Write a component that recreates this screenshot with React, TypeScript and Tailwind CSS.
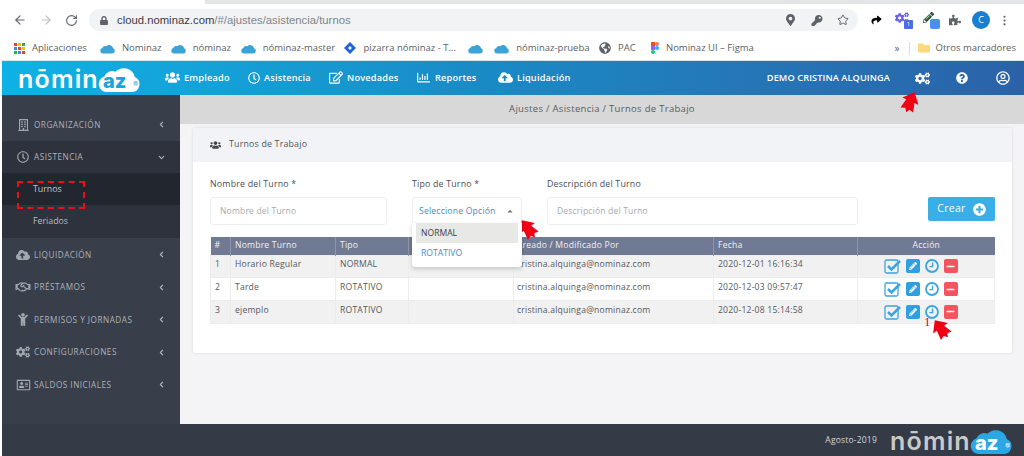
import { ReactNode } from "react"
import { ArrowLeft, ArrowRight, RotateCw, Star, MoreVertical, ChevronLeft, ChevronDown } from "lucide-react"
import {
    FaUsers, FaRegClock, FaRegEdit, FaRegChartBar, FaCloudUploadAlt, FaCogs, FaQuestionCircle, FaRegUserCircle,
    FaRegBuilding, FaRegHandshake, FaChild, FaRegAddressCard, FaPencilAlt, FaMinus, FaPlusCircle,
    FaLock, FaMapMarkerAlt, FaKey, FaPuzzlePiece, FaGlobeAmericas, FaFolder, FaShare, FaCaretUp,
} from "react-icons/fa"

const CloudMark = ({ className }: { className: string }) => (
    <svg viewBox="0 0 24 16" className={className}>
        <path d="M5 16a4.5 4.5 0 0 1-1.4-8.8A5 5 0 0 1 10 4.4 6.5 6.5 0 0 1 21 7.4 4.5 4.5 0 0 1 19.5 16z" fill="currentColor" />
    </svg>
)

const Bookmark = ({ icon, label, w }: { icon: ReactNode; label: string; w: string }) => (
    <div className={`flex items-center gap-[7px] text-[9.5px] text-[#5b5f63] whitespace-nowrap ${w}`}>
        {icon}
        <span>{label}</span>
    </div>
)

const bookmarkCloud = <CloudMark className="w-[15px] h-[11px] text-[#3aa3d8] shrink-0" />

const Logo = ({ text, box, cloud, az, mark }: { text: string; box: string; cloud: string; az: string; mark: string }) => (
    <div className={`flex items-end font-['Inter',sans-serif] leading-none ${box} ${text}`}>
        <span className="text-[25px] font-semibold tracking-[1.2px]">nōmin</span>
        <span className="relative w-[46px] h-[28px] -ml-[3px] shrink-0">
            <CloudMark className={`absolute inset-0 w-[46px] h-[28px] ${cloud}`} />
            <span className={`absolute left-[7px] bottom-[1px] text-[20px] font-extrabold ${az}`}>az</span>
            <span className={`absolute right-[4px] bottom-[4px] text-[7px] ${mark}`}>®</span>
        </span>
    </div>
)

const Arrow = ({ className }: { className: string }) => (
    <svg viewBox="0 0 20 24" className={`absolute text-[#f00014] ${className}`}>
        <path d="M10 0 20 11 15 11 18 21 13 20 11 24 8 20 3 22 5 11 0 11z" fill="currentColor" />
    </svg>
)

const CheckBoxIcon = () => (
    <svg viewBox="0 0 17 16" className="w-[17px] h-[16px]" fill="none" stroke="currentColor">
        <rect x="1" y="2" width="13" height="13" rx="1.5" strokeWidth="1.3" />
        <path d="M4 8 7.5 11.5 16 3" strokeWidth="2.6" />
    </svg>
)

const ClockIcon = () => (
    <svg viewBox="0 0 14 14" className="w-[14px] h-[14px]" fill="none" stroke="currentColor">
        <circle cx="7" cy="7" r="6" strokeWidth="1.8" />
        <path d="M7.6 3.6V7.6H4.4" strokeWidth="1.4" />
    </svg>
)

const navItems = [
    { label: "Empleado", icon: <FaUsers className="w-[15px] h-[13px]" />, w: "w-[83px]" },
    { label: "Asistencia", icon: <FaRegClock className="w-[12px] h-[12px]" />, w: "w-[81px]" },
    { label: "Novedades", icon: <FaRegEdit className="w-[14px] h-[13px]" />, w: "w-[87px]" },
    { label: "Reportes", icon: <FaRegChartBar className="w-[15px] h-[13px]" />, w: "w-[82px]" },
    { label: "Liquidación", icon: <FaCloudUploadAlt className="w-[15px] h-[13px]" />, w: "w-[90px]" },
]

const sideTop = [{ label: "ORGANIZACIÓN", icon: <FaRegBuilding className="w-[11px] h-[12px]" /> }]
const sideRest = [
    { label: "LIQUIDACIÓN", icon: <FaCloudUploadAlt className="w-[14px] h-[12px]" /> },
    { label: "PRÉSTAMOS", icon: <FaRegHandshake className="w-[16px] h-[12px]" /> },
    { label: "PERMISOS Y JORNADAS", icon: <FaChild className="w-[12px] h-[13px]" /> },
    { label: "CONFIGURACIONES", icon: <FaCogs className="w-[14px] h-[12px]" /> },
    { label: "SALDOS INICIALES", icon: <FaRegAddressCard className="w-[15px] h-[12px]" /> },
]

const SideRow = ({ icon, label, open }: { icon: ReactNode; label: string; open?: boolean }) => (
    <div className={`h-[32.5px] flex items-center pt-[1px] pl-[13px] pr-[14px] text-[#aeb2ba] text-[8.2px] tracking-[0.5px] ${open ? "bg-[#2e323c]" : ""}`}>
        <span className="w-[16px] flex justify-center text-[#a2a6ae]">{icon}</span>
        <span className="ml-[3px] flex-1 whitespace-nowrap">{label}</span>
        {open ? <ChevronDown className="w-[9px] h-[9px]" strokeWidth={3} /> : <ChevronLeft className="w-[9px] h-[9px]" strokeWidth={3} />}
    </div>
)

const rows = [
    { n: "1", name: "Horario Regular", tipo: "NORMAL", fecha: "2020-12-01 16:16:34" },
    { n: "2", name: "Tarde", tipo: "ROTATIVO", fecha: "2020-12-03 09:57:47" },
    { n: "3", name: "ejemplo", tipo: "ROTATIVO", fecha: "2020-12-08 15:14:58" },
]

const Field = ({ label, holder, w }: { label: string; holder: string; w: string }) => (
    <div className={w}>
        <div className="h-[26px] text-[8.8px] text-[#4a4d52] leading-[26px] tracking-[0.2px] whitespace-nowrap">{label}</div>
        <div className="h-[28px] border border-[#eeeeee] rounded-[3px] bg-white px-[9px] flex items-center text-[8.5px] text-[#a6a9ad] tracking-[0.2px] whitespace-nowrap overflow-hidden">{holder}</div>
    </div>
)

const App = () => {
    return (
        <div className="relative w-[1024px] h-[456px] overflow-hidden bg-white font-['Open_Sans',sans-serif]">
            {/* browser chrome */}
            <div className="h-[4px] bg-[#e4e5e7] ml-[205px]" />
            <div className="h-[32px] flex items-center pl-[13px] pr-[12px] bg-white">
                <ArrowLeft className="w-[14px] h-[14px] text-[#5f6368]" />
                <ArrowRight className="ml-[12px] w-[14px] h-[14px] text-[#bdc0c4]" />
                <RotateCw className="ml-[12px] w-[13px] h-[13px] text-[#5f6368]" />
                <div className="ml-[11px] w-[769px] h-[22px] rounded-full bg-[#f1f3f4] flex items-center pl-[11px] pr-[9px]">
                    <FaLock className="w-[8px] h-[9px] text-[#5f6368]" />
                    <span className="ml-[9px] text-[11.3px] text-[#3c4043] font-['Liberation_Sans',sans-serif]">
                        cloud.nominaz.com<span className="text-[#80868b]">/#/ajustes/asistencia/turnos</span>
                    </span>
                    <FaMapMarkerAlt className="ml-auto w-[9px] h-[12px] text-[#5f6368]" />
                    <FaKey className="ml-[16px] w-[12px] h-[11px] text-[#5f6368]" />
                    <Star className="ml-[14px] w-[12px] h-[12px] text-[#5f6368]" />
                </div>
                <FaShare className="ml-[12px] w-[13px] h-[10px] text-black" />
                <div className="relative ml-[12px] w-[18px] h-[18px]">
                    <FaCogs className="w-[14px] h-[14px] text-[#6a63e8]" />
                    <span className="absolute right-0 bottom-0 w-[9px] h-[9px] bg-[#4c6ce0] rounded-[1px] text-[6px] leading-[9px] text-center text-white">1</span>
                </div>
                <div className="relative ml-[10px] w-[17px] h-[17px]">
                    <FaPencilAlt className="w-[11px] h-[11px] text-[#2f5d3a]" />
                    <span className="absolute right-0 bottom-0 w-[10px] h-[10px] bg-[#4a8ef0] rounded-[2px]" />
                </div>
                <FaPuzzlePiece className="ml-[9px] w-[12px] h-[12px] text-[#5f6368]" />
                <div className="ml-[11px] w-[18px] h-[18px] rounded-full bg-[#1a7fd0] text-white text-[9px] leading-[18px] text-center">C</div>
                <MoreVertical className="ml-[8px] w-[13px] h-[13px] text-[#5f6368]" />
            </div>
            <div className="h-[24px] pl-[14px] pr-[8px] flex items-center bg-white">
                <div className="grid grid-cols-3 gap-[1px] w-[11px] h-[11px] mr-[7px]">
                    {["#ea4335", "#fbbc05", "#34a853", "#4285f4", "#ea4335", "#fbbc05", "#34a853", "#4285f4", "#ea4335"].map((c, i) => (
                        <span key={i} className="w-[3px] h-[3px]" style={{ background: c }} />
                    ))}
                </div>
                <div className="w-[68px] text-[9.5px] text-[#5b5f63]">Aplicaciones</div>
                <Bookmark icon={bookmarkCloud} label="Nominaz" w="w-[71px]" />
                <Bookmark icon={bookmarkCloud} label="nóminaz" w="w-[70px]" />
                <Bookmark icon={bookmarkCloud} label="nóminaz-master" w="w-[104px]" />
                <Bookmark icon={<svg viewBox="0 0 12 12" className="w-[12px] h-[12px] shrink-0"><path d="M6 0 12 6 6 12 0 6z" fill="#1f62e0" /><path d="M6 4 8 6 6 8 4 6z" fill="#fff" /></svg>} label="pizarra nóminaz - T..." w="w-[124px]" />
                <div className="w-[26px]">{bookmarkCloud}</div>
                <Bookmark icon={bookmarkCloud} label="nóminaz-prueba" w="w-[105px]" />
                <Bookmark icon={<FaGlobeAmericas className="w-[12px] h-[12px] text-[#5f6368] shrink-0" />} label="PAC" w="w-[52px]" />
                <Bookmark icon={<svg viewBox="0 0 8 12" className="w-[8px] h-[12px] shrink-0"><rect width="4" height="4" fill="#f24e1e" /><rect x="4" width="4" height="4" rx="2" fill="#ff7262" /><rect y="4" width="4" height="4" fill="#a259ff" /><circle cx="6" cy="6" r="2" fill="#1abcfe" /><rect y="8" width="4" height="4" rx="2" fill="#0acf83" /></svg>} label="Nominaz UI – Figma" w="w-[244px]" />
                <span className="text-[10px] text-[#5f6368]">»</span>
                <span className="ml-[9px] w-px h-[13px] bg-[#dadce0]" />
                <FaFolder className="ml-[8px] w-[12px] h-[12px] text-[#fbd97a]" />
                <span className="ml-[6px] text-[9.5px] text-[#5b5f63] whitespace-nowrap">Otros marcadores</span>
            </div>

            {/* top nav */}
            <div className="h-[35px] ml-[2px] flex items-center bg-gradient-to-r from-[#0eb2e6] via-[#1a88c4] to-[#2a62a8] border-t border-[#d9e6ee] text-white">
                <Logo box="ml-[16px] w-[147px]" text="text-white" cloud="text-white" az="text-[#17a5dc]" mark="text-[#17a5dc]" />
                {navItems.map((item) => (
                    <div key={item.label} className={`flex items-center gap-[4px] text-[9.2px] font-semibold tracking-[0.2px] whitespace-nowrap ${item.w}`}>
                        {item.icon}
                        <span>{item.label}</span>
                    </div>
                ))}
                <span className="ml-auto text-[9.2px] font-semibold tracking-[0.1px] whitespace-nowrap">DEMO CRISTINA ALQUINGA</span>
                <FaCogs className="ml-[25px] w-[15px] h-[13px]" />
                <FaQuestionCircle className="ml-[26px] w-[12px] h-[12px]" />
                <FaRegUserCircle className="ml-[28px] mr-[14px] w-[14px] h-[14px]" />
            </div>

            <div className="h-[329px] ml-[2px] flex">
                {/* sidebar */}
                <div className="w-[178px] bg-[#393e4b] pt-[13px] shrink-0">
                    {sideTop.map((s) => <SideRow key={s.label} {...s} />)}
                    <SideRow label="ASISTENCIA" icon={<FaRegClock className="w-[12px] h-[12px]" />} open />
                    <div className="h-[32px] bg-[#22262e] pl-[31px] pt-[1px] flex items-center text-[8.8px] text-[#c3c6cc]">Turnos</div>
                    <div className="h-[33px] bg-[#2e323c] pl-[31px] pt-[1px] flex items-center text-[8.8px] text-[#b8bbc2]">Feriados</div>
                    {sideRest.map((s) => <SideRow key={s.label} {...s} />)}
                </div>

                {/* content */}
                <div className="flex-1 bg-[#f4f4f6]">
                    <div className="h-[29px] bg-[#d8d8d8] flex items-center justify-center text-[9.5px] text-[#595c60] tracking-[0.3px]">
                        Ajustes / Asistencia / Turnos de Trabajo
                    </div>
                    <div className="mt-[4px] ml-[13px] w-[819px] h-[225px] bg-white rounded-[2px] shadow-[0_0_3px_rgba(0,0,0,0.12)]">
                        <div className="h-[34px] bg-[#f2f3f6] flex items-center pl-[17px] gap-[8px] text-[8.8px] text-[#50535a] tracking-[0.2px]">
                            <FaUsers className="w-[11px] h-[10px] text-[#44474e]" />
                            <span>Turnos de Trabajo</span>
                        </div>
                        <div className="px-[17px]">
                            <div className="h-[75px] pt-[9px] flex relative">
                                <Field label="Nombre del Turno *" holder="Nombre del Turno" w="w-[177px]" />
                                <div className="ml-[25px] w-[110px] relative">
                                    <div className="h-[26px] text-[8.8px] text-[#4a4d52] leading-[26px] tracking-[0.2px] whitespace-nowrap">Tipo de Turno *</div>
                                    <div className="h-[28px] border border-[#eeeeee] rounded-[3px] pl-[6px] pr-[7px] flex items-center justify-between text-[8.6px] text-[#3a8fd0] tracking-[0.2px] whitespace-nowrap">
                                        Seleccione Opción
                                        <FaCaretUp className="w-[8px] h-[8px] text-[#777]" />
                                    </div>
                                    <div className="absolute z-10 left-0 top-[52px] w-[110px] h-[44px] bg-white rounded-b-[3px] shadow-[0_2px_4px_rgba(0,0,0,0.18)] px-[4px] text-[8.6px]">
                                        <div className="h-[20px] bg-[#e8e8e6] text-[#3e4044] pl-[5px] flex items-center">NORMAL</div>
                                        <div className="h-[20px] text-[#3a8fd0] pl-[5px] flex items-center">ROTATIVO</div>
                                    </div>
                                </div>
                                <Field label="Descripción del Turno" holder="Descripción del Turno" w="ml-[25px] w-[311px]" />
                                <div className="ml-[70px] mt-[26px] w-[67px] h-[24px] rounded-[2px] bg-[#3aaee6] flex items-center justify-center gap-[7px] text-white text-[10.5px] tracking-[0.3px]">
                                    Crear
                                    <FaPlusCircle className="w-[13px] h-[13px]" />
                                </div>
                            </div>
                            <table className="w-[785px] table-fixed border-collapse text-[8.6px] text-[#55585d] tracking-[0.2px]">
                                <thead>
                                    <tr className="h-[18px] bg-[#707a94] text-[#f0f1f4] text-left">
                                        <th className="w-[20px] pl-[4px] font-normal border-r border-[#8d95aa]">#</th>
                                        <th className="w-[105px] pl-[4px] font-normal border-r border-[#8d95aa]">Nombre Turno</th>
                                        <th className="w-[73px] pl-[4px] font-normal border-r border-[#8d95aa]">Tipo</th>
                                        <th className="w-[105px] font-normal border-r border-[#8d95aa]" />
                                        <th className="w-[200px] pl-[3px] font-normal border-r border-[#8d95aa]">Creado / Modificado Por</th>
                                        <th className="w-[144px] pl-[4px] font-normal border-r border-[#8d95aa]">Fecha</th>
                                        <th className="font-normal text-center">Acción</th>
                                    </tr>
                                </thead>
                                <tbody>
                                    {rows.map((r, i) => (
                                        <tr key={r.n} className={`h-[22.7px] ${i === 1 ? "bg-white" : "bg-[#f1f1f1]"}`}>
                                            <td className="pl-[4px] pb-[3px] border border-[#ececec]">{r.n}</td>
                                            <td className="pl-[4px] pb-[3px] border border-[#ececec]">{r.name}</td>
                                            <td className="pl-[4px] pb-[3px] border border-[#ececec]">{r.tipo}</td>
                                            <td className="border border-[#ececec]" />
                                            <td className="pl-[3px] pb-[3px] border border-[#ececec]">cristina.alquinga@nominaz.com</td>
                                            <td className="pl-[4px] pb-[3px] border border-[#ececec]">{r.fecha}</td>
                                            <td className="border border-[#ececec]">
                                                <div className="flex items-center justify-center gap-[5px] pr-[11px] text-[#3aa5e0]">
                                                    <CheckBoxIcon />
                                                    <span className="w-[14px] h-[14px] rounded-[2px] bg-[#2f9fe0] flex items-center justify-center">
                                                        <FaPencilAlt className="w-[8px] h-[8px] text-white" />
                                                    </span>
                                                    <ClockIcon />
                                                    <span className="w-[14px] h-[14px] rounded-[2px] bg-[#f4545e] flex items-center justify-center">
                                                        <FaMinus className="w-[9px] h-[9px] text-white" />
                                                    </span>
                                                </div>
                                            </td>
                                        </tr>
                                    ))}
                                </tbody>
                            </table>
                        </div>
                    </div>
                </div>
            </div>

            {/* footer */}
            <div className="h-[32px] ml-[2px] bg-[#343a46] flex items-center justify-end">
                <span className="text-[8.5px] text-[#d5d7da] tracking-[0.2px]">Agosto-2019</span>
                <Logo box="ml-[13px] mr-[12px] w-[122px]" text="text-[#c9c9c9]" cloud="text-[#2aa7e4]" az="text-white" mark="text-white" />
            </div>

            {/* annotations over the screenshot */}
            <div className="absolute left-[17px] top-[181px] w-[68px] h-[28px] border-2 border-dashed border-[#e8101c]" />
            <span className="absolute left-[924px] top-[315px] text-[13px] leading-[14px] text-[#f00014] font-['Liberation_Serif',serif]">1</span>
            <Arrow className="left-[901px] top-[91px] w-[18px] h-[22px] rotate-[25deg]" />
            <Arrow className="left-[519px] top-[218px] w-[18px] h-[22px] -rotate-[35deg]" />
            <Arrow className="left-[932px] top-[318px] w-[18px] h-[22px] -rotate-[35deg]" />
        </div>
    )
}

export default App
